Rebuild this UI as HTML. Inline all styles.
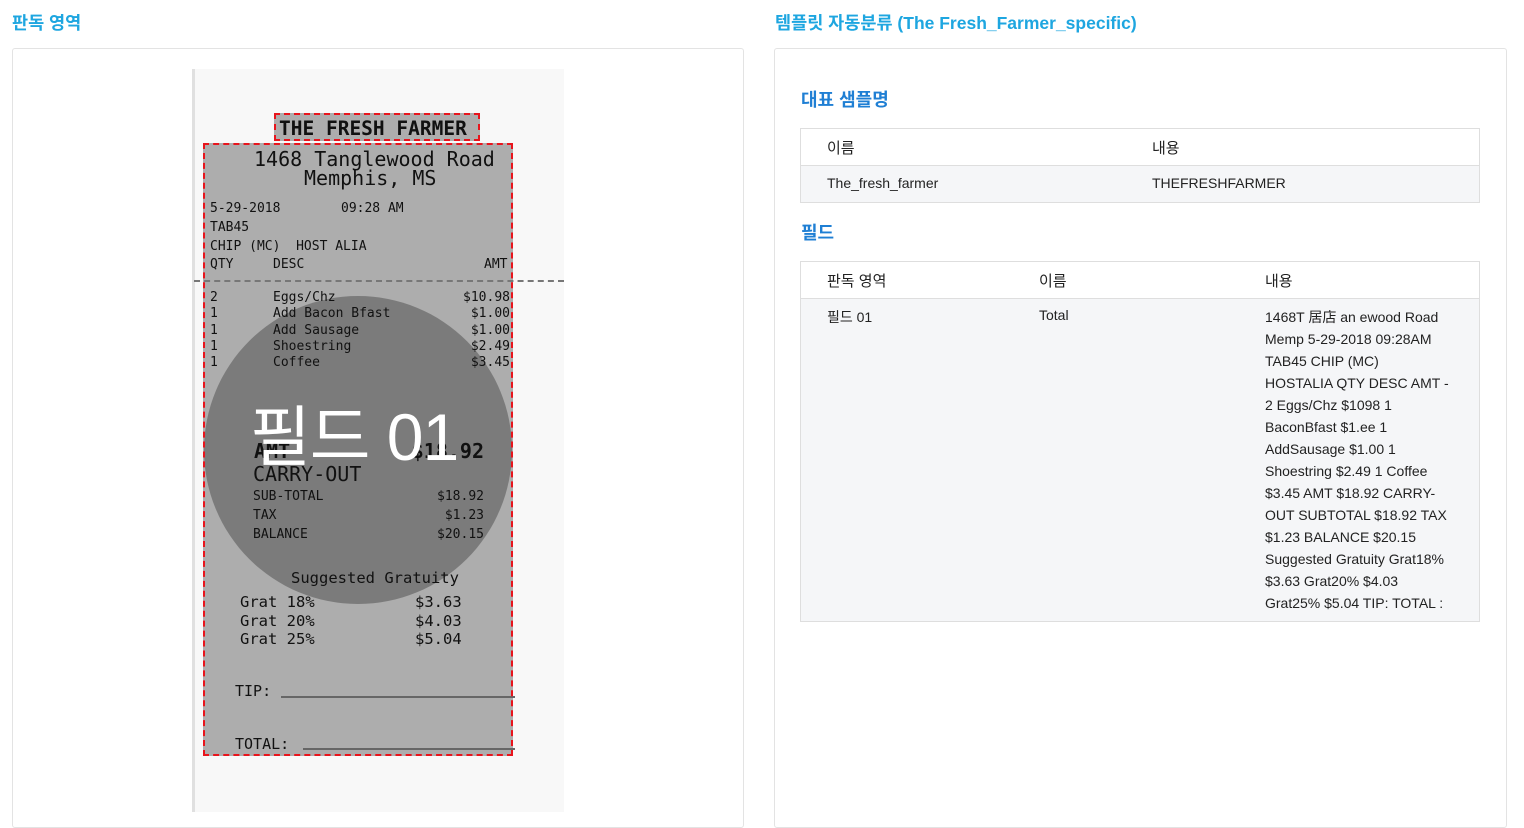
<!DOCTYPE html>
<html><head><meta charset="utf-8"><style>
*{margin:0;padding:0;box-sizing:border-box}
body{width:1524px;height:812px;overflow:hidden;background:#fff;font-family:"Liberation Sans","Noto Sans CJK KR",sans-serif;position:relative;color:#222}
.a{position:absolute}
.h{font-size:17.5px;font-weight:bold;color:#1ea6e0;white-space:nowrap}
.panel{border:1px solid #e3e3e3;border-radius:3px;background:#fff}
.st{font-size:18px;font-weight:bold;color:#1f7fd4}
.t{font-size:14px;color:#222;white-space:nowrap}
.mono{font-family:"DejaVu Sans Mono","Liberation Mono",monospace;color:#111;white-space:pre;line-height:1}
.r{text-align:right}
.red{border:2px dashed #e8141c}
</style></head><body>
<div class="a h" style="left:12px;top:10px">판독 영역</div>
<div class="a h" style="left:775px;top:10px">템플릿 자동분류 (The Fresh_Farmer_specific)</div>

<div class="a panel" style="left:12px;top:48px;width:732px;height:780px"></div>
<div class="a panel" style="left:774px;top:48px;width:733px;height:780px"></div>

<div class="a" style="left:192px;top:69px;width:372px;height:743px;background:#f8f8f8;border-left:3px solid #e0e0e0"></div>
<div class="a" style="left:203px;top:143px;width:310px;height:613px;background:#adadad"></div>
<div class="a" style="left:274px;top:113px;width:206px;height:28px;background:#adadad"></div>
<div class="a" style="left:194px;top:280px;width:370px;border-top:2px dashed #777"></div>
<div class="a" style="left:204px;top:296px;width:308px;height:308px;border-radius:50%;background:#7b7b7b"></div>

<div class="a mono" style="left:279px;top:119px;font-size:19.5px;font-weight:bold">THE FRESH FARMER</div>
<div class="a mono" style="left:254px;top:149px;font-size:20px">1468 Tanglewood Road</div>
<div class="a mono" style="left:304px;top:168px;font-size:20px">Memphis, MS</div>
<div class="a mono" style="left:210px;top:200px;font-size:13px;line-height:18.8px">5-29-2018
TAB45
CHIP (MC)  HOST ALIA
QTY</div>
<div class="a mono" style="left:341px;top:200px;font-size:13px;line-height:18.8px">09:28 AM</div>
<div class="a mono" style="left:273px;top:256.4px;font-size:13px;line-height:18.8px">DESC</div>
<div class="a mono" style="left:484px;top:256.4px;font-size:13px;line-height:18.8px">AMT</div>
<div class="a mono" style="left:210px;top:290px;font-size:13px;line-height:16.3px">2
1
1
1
1</div>
<div class="a mono" style="left:273px;top:290px;font-size:13px;line-height:16.3px">Eggs/Chz
Add Bacon Bfast
Add Sausage
Shoestring
Coffee</div>
<div class="a mono r" style="left:400px;width:110px;top:290px;font-size:13px;line-height:16.3px">$10.98
$1.00
$1.00
$2.49
$3.45</div>
<div class="a mono" style="left:254px;top:441px;font-size:20px;font-weight:bold">AMT</div>
<div class="a mono r" style="left:380px;width:104px;top:441px;font-size:20px;font-weight:bold">$18.92</div>
<div class="a mono" style="left:253px;top:464px;font-size:20px">CARRY-OUT</div>
<div class="a mono" style="left:253px;top:488px;font-size:13px;line-height:18.8px">SUB-TOTAL
TAX
BALANCE</div>
<div class="a mono r" style="left:384px;width:100px;top:488px;font-size:13px;line-height:18.8px">$18.92
$1.23
$20.15</div>
<div class="a mono" style="left:291px;top:571px;font-size:15.5px">Suggested Gratuity</div>
<div class="a mono" style="left:240px;top:593px;font-size:15.5px;line-height:18.7px">Grat 18%
Grat 20%
Grat 25%</div>
<div class="a mono" style="left:415px;top:593px;font-size:15.5px;line-height:18.7px">$3.63
$4.03
$5.04</div>
<div class="a mono" style="left:235px;top:684px;font-size:15px">TIP:</div>
<div class="a" style="left:281px;top:696px;width:234px;border-top:2px solid #666"></div>
<div class="a mono" style="left:235px;top:737px;font-size:15px">TOTAL:</div>
<div class="a" style="left:303px;top:748px;width:212px;border-top:2px solid #666"></div>

<div class="a red" style="left:274px;top:113px;width:206px;height:28px"></div>
<div class="a red" style="left:203px;top:143px;width:310px;height:613px"></div>
<div class="a" style="left:250px;top:404px;font-size:66px;color:#fff;white-space:nowrap;line-height:1;letter-spacing:-1px">필드 01</div>

<div class="a st" style="left:801px;top:86px">대표 샘플명</div>
<div class="a" style="left:800px;top:128px;width:680px;height:75px;border:1px solid #dedede">
 <div class="a" style="left:0;top:36px;width:678px;height:37px;background:#f5f6f8;border-top:1px solid #dedede"></div>
 <div class="a t" style="left:26px;top:8px;font-size:15px">이름</div>
 <div class="a t" style="left:351px;top:8px;font-size:15px">내용</div>
 <div class="a t" style="left:26px;top:46px">The_fresh_farmer</div>
 <div class="a t" style="left:351px;top:46px">THEFRESHFARMER</div>
</div>
<div class="a st" style="left:801px;top:219px">필드</div>
<div class="a" style="left:800px;top:261px;width:680px;height:361px;border:1px solid #dedede">
 <div class="a" style="left:0;top:36px;width:678px;height:323px;background:#f5f6f8;border-top:1px solid #dedede"></div>
 <div class="a t" style="left:26px;top:8px;font-size:15px">판독 영역</div>
 <div class="a t" style="left:238px;top:8px;font-size:15px">이름</div>
 <div class="a t" style="left:464px;top:8px;font-size:15px">내용</div>
 <div class="a t" style="left:26px;top:45px">필드 01</div>
 <div class="a t" style="left:238px;top:45px">Total</div>
 <div class="a t" style="left:464px;top:44px;line-height:22px">1468T 居店 an ewood Road<br>Memp 5-29-2018 09:28AM<br>TAB45 CHIP (MC)<br>HOSTALIA QTY DESC AMT -<br>2 Eggs/Chz $1098 1<br>BaconBfast $1.ee 1<br>AddSausage $1.00 1<br>Shoestring $2.49 1 Coffee<br>$3.45 AMT $18.92 CARRY-<br>OUT SUBTOTAL $18.92 TAX<br>$1.23 BALANCE $20.15<br>Suggested Gratuity Grat18%<br>$3.63 Grat20% $4.03<br>Grat25% $5.04 TIP: TOTAL :</div>
</div>
</body></html>
